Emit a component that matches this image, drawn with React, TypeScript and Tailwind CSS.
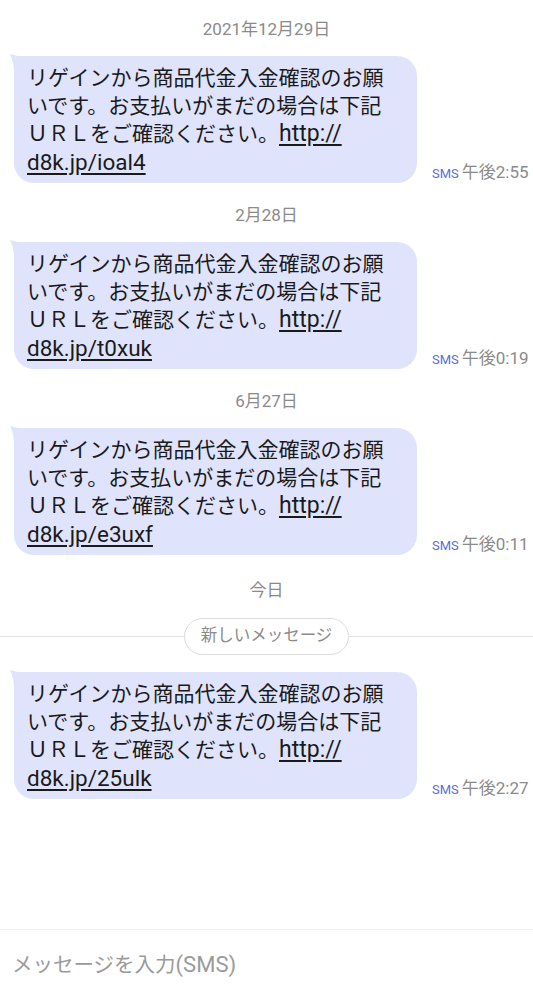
const font = { fontFamily: 'Roboto, "Noto Sans CJK JP", sans-serif' };

type Msg = { date: string; url: string; time: string };

const messages: Msg[] = [
  { date: "2021年12月29日", url: "d8k.jp/ioal4", time: "午後2:55" },
  { date: "2月28日", url: "d8k.jp/t0xuk", time: "午後0:19" },
  { date: "6月27日", url: "d8k.jp/e3uxf", time: "午後0:11" },
];

function DateLabel({ text }: { text: string }) {
  return (
    <div className="h-5 leading-5 text-center text-[17px] text-[#8a8a8a]">{text}</div>
  );
}

function Bubble({ url, time }: { url: string; time: string }) {
  return (
    <div className="flex items-end gap-[15px] pl-[14px]">
      <div className="relative w-[403px] h-[127px] bg-[#dfe4fc] rounded-[20px] rounded-tl-none pl-[13px] pt-[9px] pb-[8px] text-[21px] leading-[27.5px] text-[#1a1a1a]">
        <svg
          className="absolute -left-[4px] -top-[2px]"
          width="18"
          height="18"
          viewBox="0 0 18 18"
        >
          <path d="M0 0 Q9 3 18 2 L18 18 L4 18 Q4 8 0 0 Z" fill="#dfe4fc" />
        </svg>
        <div className="relative">
          リゲインから商品代金入金確認のお願
          <br />
          いです。お支払いがまだの場合は下記
          <br />
          ＵＲＬをご確認ください。
          <span className="text-[23px] underline underline-offset-[3px]">http://</span>
          <br />
          <span className="text-[22.5px] underline underline-offset-[3px]">{url}</span>
        </div>
      </div>
      <div className="flex items-baseline gap-[3px] -mb-[1px] leading-5 whitespace-nowrap">
        <span className="text-[13px] text-[#5a6fd8]">SMS</span>
        <span className="text-[17px] text-[#8a8a8a]">{time}</span>
      </div>
    </div>
  );
}

export default function App() {
  return (
    <div className="flex flex-col h-[999px] bg-white overflow-hidden" style={font}>
      <main className="flex-1 pt-[19px]">
        {messages.map((m, i) => (
          <div key={m.url} className={i === 0 ? "" : "mt-[22px]"}>
            <DateLabel text={m.date} />
            <div className="mt-[17px]">
              <Bubble url={m.url} time={m.time} />
            </div>
          </div>
        ))}

        <div className="mt-[25px]">
          <DateLabel text="今日" />
        </div>
        <div className="mt-[18px] flex items-center">
          <div className="flex-1 h-px bg-[#e2e2e2]" />
          <div className="h-[37px] w-[165px] flex items-center justify-center rounded-full border border-[#dcdcdc] text-[16.5px] text-[#8a8a8a]">
            新しいメッセージ
          </div>
          <div className="flex-1 h-px bg-[#e2e2e2]" />
        </div>
        <div className="mt-[17px]">
          <Bubble url="d8k.jp/25ulk" time="午後2:27" />
        </div>
      </main>

      <footer className="h-[70px] border-t border-[#f0f0f0] flex items-center pl-[12px]">
        <span className="text-[20.5px] text-[#9a9a9a]">
          メッセージを入力<span className="text-[22px]">(SMS)</span>
        </span>
      </footer>
    </div>
  );
}
